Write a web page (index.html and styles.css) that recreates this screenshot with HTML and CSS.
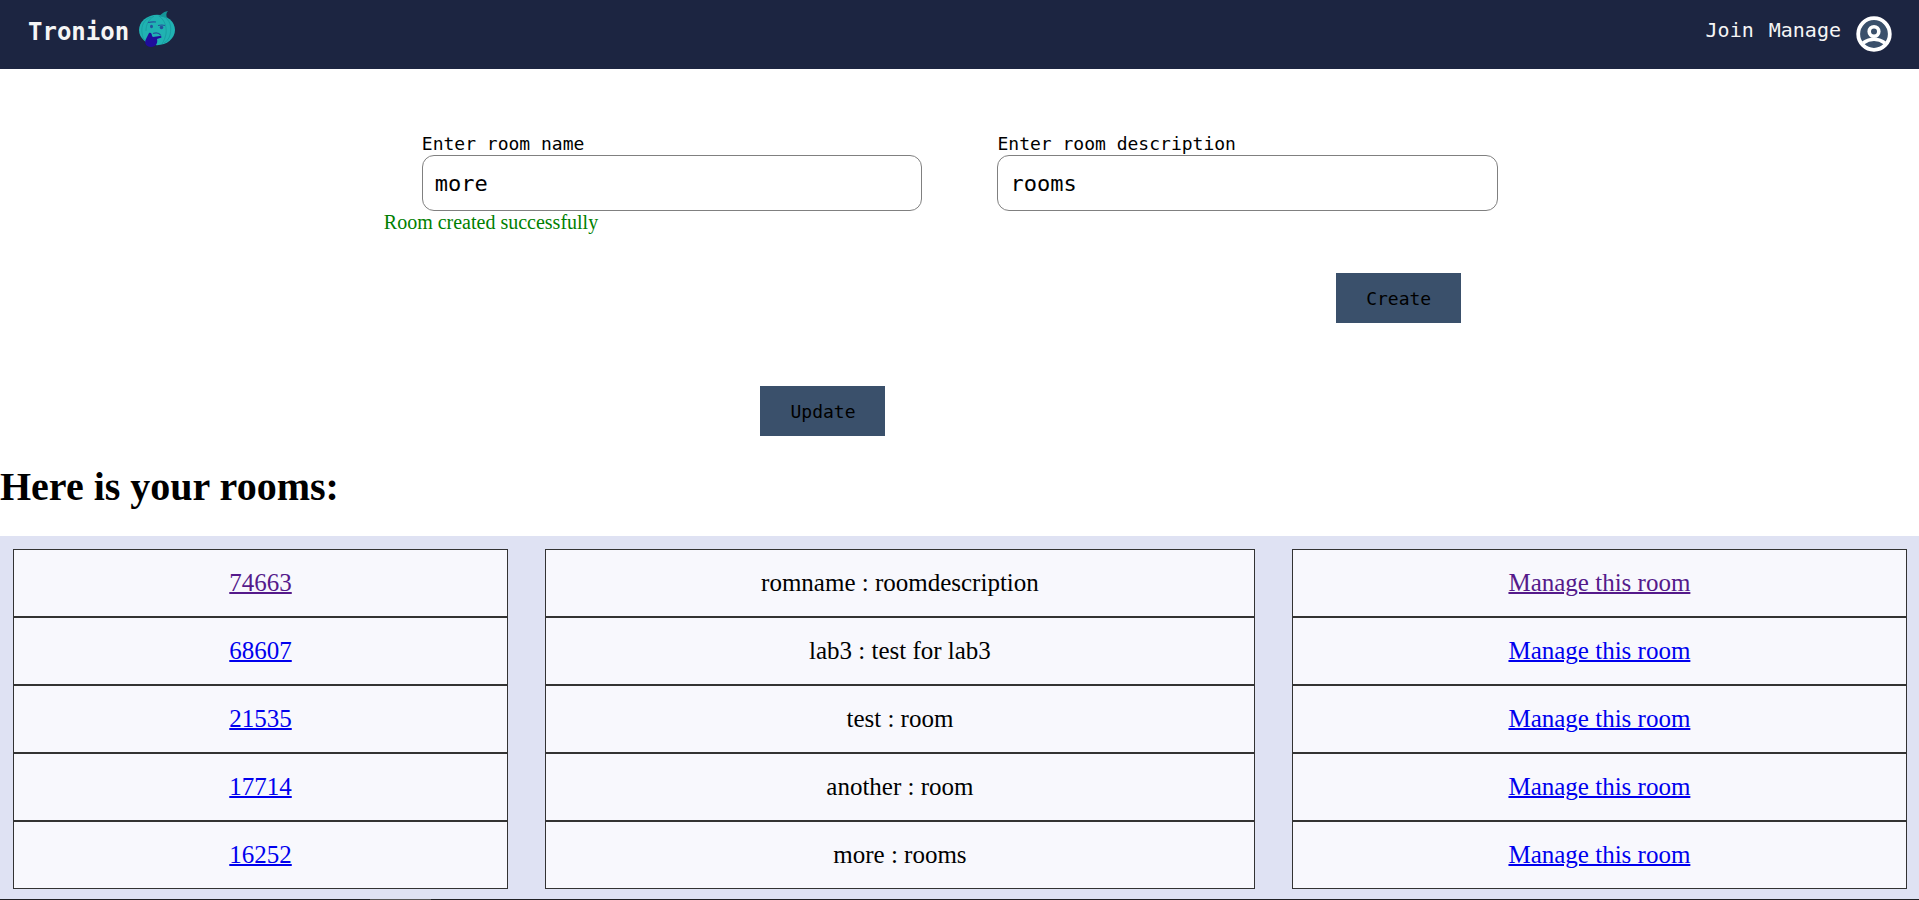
FILE: index.html
```html
<!DOCTYPE html>
<html lang="en">
<head>
<meta charset="utf-8">
<title>Tronion</title>
<link rel="stylesheet" href="styles.css">
</head>
<body>
<header class="header">
  <a class="brand" href="#">
    <span class="brand-name">Tronion</span>
    <svg class="logo" viewBox="0 0 36 36" aria-hidden="true">
      <ellipse cx="18" cy="19" rx="18" ry="15.2" fill="#20b2b2"/>
      <path d="M19 5C23 4 23 1 29 0c-2 2-2 4-1 7l-4-1z" fill="#159497"/>
      <path d="M12 6C5 9 2 14 3 22s4 8 6 10M15 5c-6 4-8 9-8 15M24 5c7 4 9 10 7 19-1 4-4 7-6 8M20 5c5 4 8 9 7 18-1 4-2 7-4 10" fill="none" stroke="#17999d" stroke-width="0.8"/>
      <path d="M9 11.500q4-1 8-.5M19 14.500q4-1 7 0M14 22.500q5-2 8 2" fill="none" stroke="#25509b" stroke-width="1.200"/>
      <ellipse cx="12.500" cy="15.500" rx="1.500" ry="1.800" fill="#25509b"/>
      <ellipse cx="22.500" cy="16.500" rx="1.800" ry="1.800" fill="#25509b"/>
      <path d="M10 22c2-1 3 1 3 3l1 1 7-1c2 0 2 2 0 2l-3 1c1 4-1 8-6 8-5 0-7-4-5-8 1-2 2-4 3-6z" fill="#200c9c"/>
    </svg>
  </a>
  <nav class="nav">
    <a href="#">Join</a>
    <a href="#">Manage</a>
    <a class="profile" href="#" aria-label="Profile">
      <svg class="avatar" viewBox="0 0 36 36" aria-hidden="true">
        <circle cx="18" cy="18" r="16" fill="#3a506b"/>
        <path d="M7 27q11-7.500 22 0" fill="none" stroke="#fff" stroke-width="3.600"/>
        <circle cx="18" cy="15.500" r="4.800" fill="#3a506b" stroke="#fff" stroke-width="3.600"/>
        <circle cx="18" cy="18" r="15.800" fill="none" stroke="#fff" stroke-width="3.800"/>
      </svg>
    </a>
  </nav>
</header>
<main>
  <form class="room-form">
    <div class="field">
      <label for="name">Enter room name</label>
      <input id="name" type="text" value="more">
    </div>
    <div class="field">
      <label for="description">Enter room description</label>
      <input id="description" type="text" value="rooms">
    </div>
    <p class="message">Room created successfully</p>
    <button class="button create" type="button">Create</button>
    <button class="button update" type="button">Update</button>
  </form>
  <h1 class="title">Here is your rooms:</h1>
  <div class="rooms">
    <table class="rooms-table">
      <colgroup><col class="col-id"><col class="col-name"><col class="col-manage"></colgroup>
      <tbody>
        <tr><td><a class="visited" href="#">74663</a></td><td>romname : roomdescription</td><td><a class="visited" href="#">Manage this room</a></td></tr>
        <tr><td><a href="#">68607</a></td><td>lab3 : test for lab3</td><td><a href="#">Manage this room</a></td></tr>
        <tr><td><a href="#">21535</a></td><td>test : room</td><td><a href="#">Manage this room</a></td></tr>
        <tr><td><a href="#">17714</a></td><td>another : room</td><td><a href="#">Manage this room</a></td></tr>
        <tr><td><a href="#">16252</a></td><td>more : rooms</td><td><a href="#">Manage this room</a></td></tr>
      </tbody>
    </table>
  </div>
</main>
<footer class="edge"></footer>
</body>
</html>
```
FILE: styles.css
```css
* {
  box-sizing: border-box;
}

body {
  margin: 0;
  background: #fff;
  color: #000;
  font-family: "Liberation Serif", "Times New Roman", serif;
}

.header {
  display: flex;
  justify-content: space-between;
  align-items: flex-start;
  padding: 11px 27px 17px 28px;
  background: #1c2541;
  color: #f5f5f5;
  font-family: Consolas, "DejaVu Sans Mono", monospace;
}

.header a {
  color: inherit;
  text-decoration: none;
}

.header .brand {
  display: flex;
  gap: 10px;
  font-size: 24px;
  font-weight: bold;
  line-height: 41px;
}

.brand-name {
  padding-top: 2px;
  line-height: 39px;
}

.logo,
.avatar {
  display: block;
  width: 36px;
  height: 36px;
}

.nav {
  display: flex;
  gap: 15px;
  font-size: 20px;
  line-height: 38px;
}

.profile {
  padding-top: 5px;
}

.room-form {
  display: grid;
  grid-template-columns: 1fr 1fr;
  width: 60%;
  margin: 0 auto;
  padding-top: 63px;
}

.field {
  display: flex;
  flex-direction: column;
  padding: 0 37px 0 38px;
  font-family: Consolas, "DejaVu Sans Mono", monospace;
}

.field label {
  font-size: 18px;
  line-height: 23px;
}

.field input {
  width: 100%;
  height: 56px;
  padding: 0 12px;
  border: 1px solid #808080;
  border-radius: 12px;
  background: #fff;
  color: #000;
  font-family: inherit;
  font-size: 22px;
}

.message {
  grid-column: 1 / 3;
  margin: 0;
  color: green;
  font-size: 20px;
  line-height: 23px;
}

.button {
  justify-self: end;
  width: 125px;
  height: 50px;
  margin-right: 74px;
  border: 0;
  background: #3a506b;
  color: #000;
  font-family: Consolas, "DejaVu Sans Mono", monospace;
  font-size: 18px;
}

.create {
  grid-column: 2;
  margin-top: 39px;
}

.update {
  grid-column: 1;
  margin-top: 63px;
}

.title {
  margin: 28px 0 26px;
  font-size: 40px;
  line-height: 46px;
}

.rooms {
  overflow: hidden;
  padding: 13px 12px 10px 13px;
  background: #dfe2f3;
}

.rooms-table {
  width: calc(100% + 74px);
  margin: 0 -37px;
  border-spacing: 37px 0;
  table-layout: fixed;
  font-size: 25px;
  line-height: 26px;
  text-align: center;
}

.rooms-table td {
  padding: 20px;
  border: 1px solid #333;
  background: #f8f8fd;
}

.rooms-table a {
  color: #0000ee;
  text-decoration-thickness: 2px;
}

.rooms-table .visited {
  color: #551a8b;
}

.col-id {
  width: 27.2%;
}

.col-name {
  width: 39%;
}

.col-manage {
  width: 33.8%;
}

.edge {
  height: 1px;
  background: linear-gradient(#555, #555) 370px 0 / 61px 1px no-repeat #202124;
}
```
